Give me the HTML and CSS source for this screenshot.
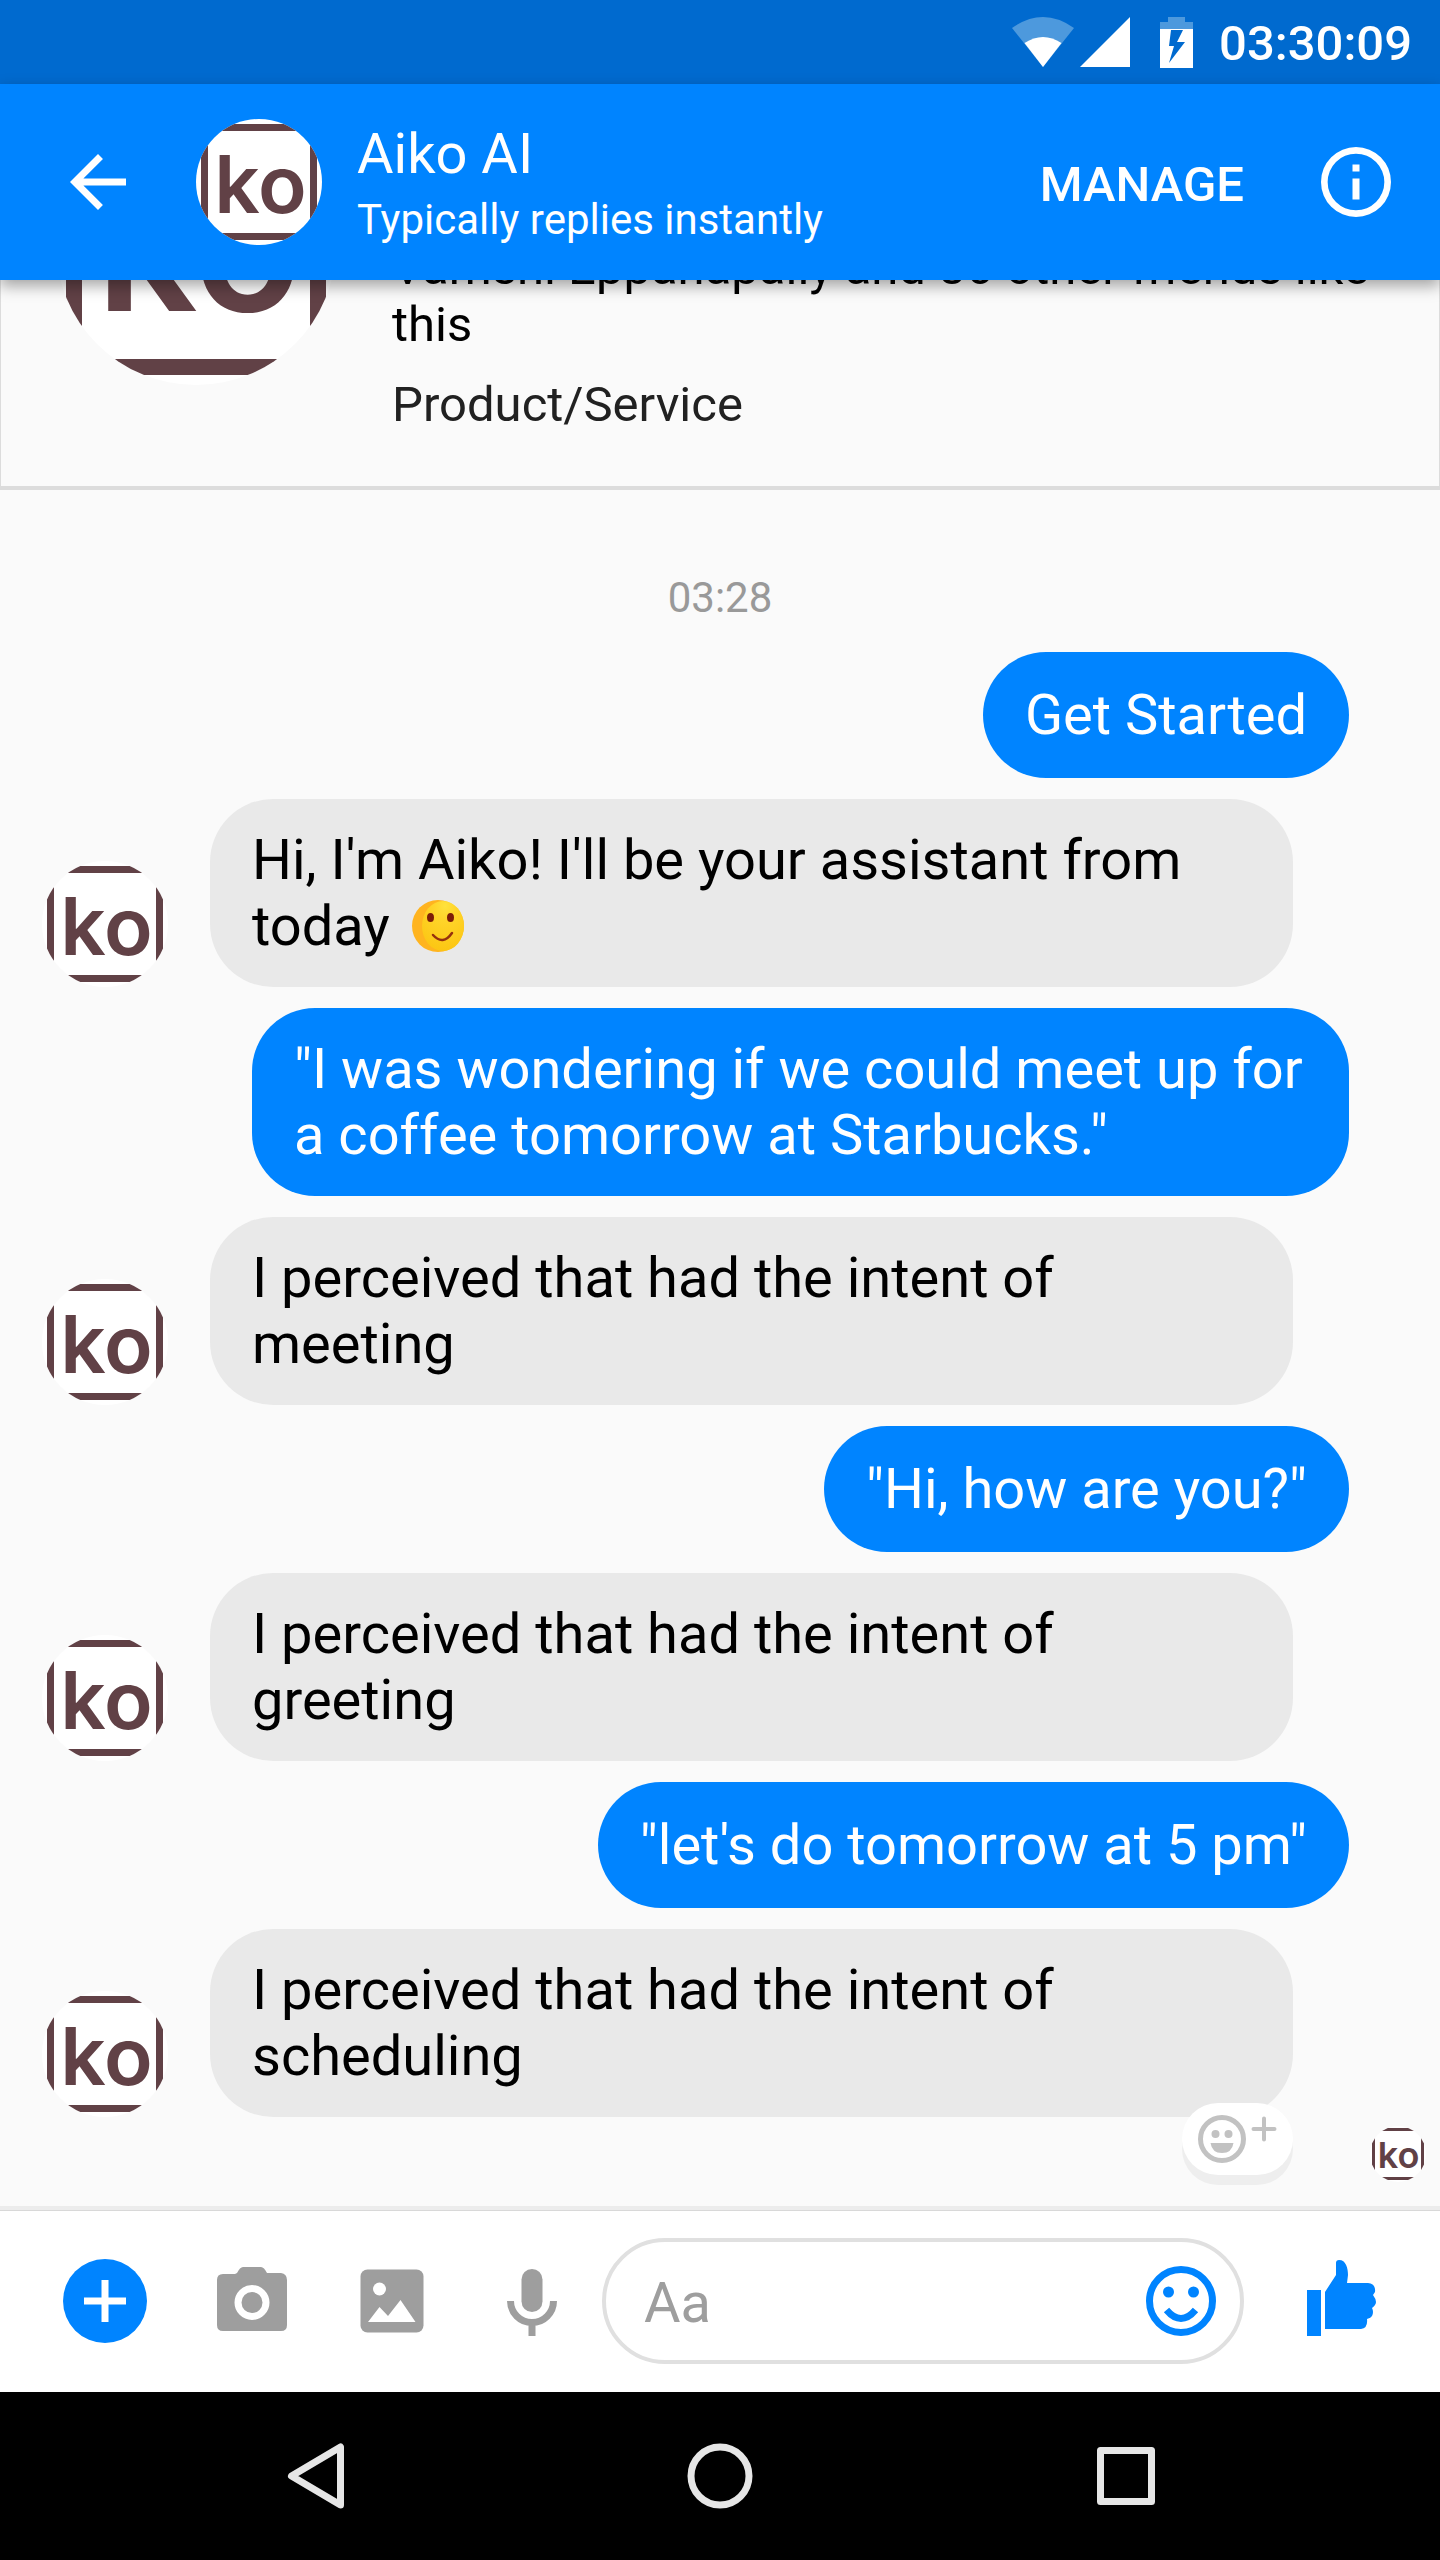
FILE: index.html
```html
<!DOCTYPE html>
<html lang="en">
<head>
<meta charset="utf-8">
<meta name="viewport" content="width=device-width, initial-scale=1">
<title>Aiko AI</title>
<link rel="stylesheet" href="styles.css">
</head>
<body>
<div class="phone">
  <div class="status">
    <svg class="wifi" viewBox="0 0 62 50"><path d="M0 11Q31-11 62 11L31 50Z" fill="#4d99dd"/><path d="M12.500 26Q31 14 49.500 26L31 50Z" fill="#fff"/></svg>
    <svg class="signal" viewBox="0 0 50 50"><path d="M50 0V50H0Z" fill="#fff"/></svg>
    <svg class="battery" viewBox="0 0 33 51"><path d="M0 12V5H8V0H25V5H33V12Z" fill="#4d99dd"/><path d="M0 12H33V51H0Z" fill="#fff"/><path d="M11 13H23L17 25H25L9 46L14 29H9Z" fill="#006acf"/></svg>
    <time class="clock">03:30:09</time>
  </div>
  <header class="toolbar">
    <button class="icon-btn" aria-label="Back"><svg viewBox="0 0 24 24"><path d="M20 11H7.830l5.590-5.590L12 4l-8 8 8 8 1.410-1.410L7.830 13H20z" fill="#fff"/></svg></button>
    <span class="logo">ko</span>
    <div class="who">
      <h1>Aiko AI</h1>
      <p>Typically replies instantly</p>
    </div>
    <button class="manage">MANAGE</button>
    <button class="icon-btn" aria-label="Info"><svg viewBox="0 0 24 24"><path d="M11 17h2v-6h-2zm1-15a10 10 0 1 0 0 20 10 10 0 0 0 0-20m0 18.100a8.100 8.100 0 1 1 0-16.200 8.100 8.100 0 0 1 0 16.200M11 9h2V7h-2z" fill="#fff"/></svg></button>
  </header>
  <main class="thread">
    <section class="card">
      <span class="logo logo-large">ko</span>
      <div class="card-text">
        <p class="likes">Vamshi Eppanapally and 86 other friends like this</p>
        <p class="kind">Product/Service</p>
      </div>
    </section>
    <time class="stamp">03:28</time>
    <div class="messages">
      <div class="row out"><p class="bubble">Get Started</p></div>
      <div class="row in"><span class="logo">ko</span><p class="bubble">Hi, I'm Aiko! I'll be your assistant from today <svg class="emoji" viewBox="0 0 52 52" role="img" aria-label="smile"><defs><radialGradient id="face" cx=".55" cy=".1" r=".9"><stop offset="0" stop-color="#ffe23c"/><stop offset=".3" stop-color="#ffd52a"/><stop offset="1" stop-color="#fcc613"/></radialGradient></defs><circle cx="26" cy="26" r="26" fill="#ffb41f"/><ellipse cx="31" cy="26" rx="21" ry="25" fill="url(#face)"/><ellipse cx="18.500" cy="17.500" rx="3.500" ry="4.500" fill="#7d1d08"/><ellipse cx="38.500" cy="17.500" rx="3.500" ry="4.500" fill="#7d1d08"/><path d="M21 35Q31 46 40 33" fill="none" stroke="#96300e" stroke-width="2.500" stroke-linecap="round"/></svg></p></div>
      <div class="row out"><p class="bubble">"I was wondering if we could meet up for a coffee tomorrow at Starbucks."</p></div>
      <div class="row in"><span class="logo">ko</span><p class="bubble">I perceived that had the intent of meeting</p></div>
      <div class="row out"><p class="bubble">"Hi, how are you?"</p></div>
      <div class="row in"><span class="logo">ko</span><p class="bubble">I perceived that had the intent of greeting</p></div>
      <div class="row out"><p class="bubble">"let's do tomorrow at 5 pm"</p></div>
      <div class="row in"><span class="logo">ko</span><p class="bubble">I perceived that had the intent of scheduling</p>
        <button class="react" aria-label="Add reaction"><svg viewBox="0 0 80 50"><circle cx="24" cy="25" r="21.500" fill="none" stroke="#c2c2c2" stroke-width="5"/><circle cx="17.500" cy="20" r="4" fill="#c2c2c2"/><circle cx="30.500" cy="20" r="4" fill="#c2c2c2"/><path d="M12.500 29H35.500Q34 39 24 39T12.500 29Z" fill="#c2c2c2"/><path d="M55.500 15H76.500M66 4.500V25.500" stroke="#c2c2c2" stroke-width="4" stroke-linecap="round"/></svg></button>
      </div>
    </div>
    <span class="logo logo-small">ko</span>
  </main>
  <form class="composer">
    <button type="button" class="icon-btn" aria-label="More"><svg viewBox="0 0 84 84"><circle cx="42" cy="42" r="42" fill="#0084ff"/><path d="M21 42H63M42 21V63" stroke="#fff" stroke-width="7"/></svg></button>
    <button type="button" class="icon-btn camera" aria-label="Camera"><svg viewBox="0 0 84 84"><path fill="#9e9e9e" d="M27 14Q30 8 33 8H51Q54 8 57 14H71Q77 15 77 21V66Q77 72 71 72H13Q7 72 7 66V21Q7 15 13 15H25Z"/><circle cx="42" cy="43.500" r="14" fill="#9e9e9e" stroke="#fff" stroke-width="7"/></svg></button>
    <button type="button" class="icon-btn" aria-label="Picture"><svg viewBox="0 0 84 84"><rect x="10.500" y="10.500" width="63" height="63" rx="7" fill="#9e9e9e"/><circle cx="29.500" cy="30" r="6.500" fill="#fff"/><path d="M18 63L29.500 48L38 57L50.500 41L65.500 63Z" fill="#fff"/></svg></button>
    <button type="button" class="icon-btn" aria-label="Voice"><svg viewBox="0 0 84 84"><rect x="31.500" y="10" width="21" height="43" rx="10.500" fill="#9e9e9e"/><path d="M20.500 42A21.500 21.500 0 0 0 63.500 42M42 63V77" fill="none" stroke="#9e9e9e" stroke-width="7"/></svg></button>
    <div class="field">
      <input type="text" placeholder="Aa" aria-label="Message">
      <button type="button" class="icon-btn" aria-label="Emoji"><svg viewBox="0 0 84 84"><circle cx="42" cy="42" r="31.500" fill="none" stroke="#0084ff" stroke-width="7"/><circle cx="29.500" cy="33" r="5.500" fill="#0084ff"/><circle cx="54.500" cy="33" r="5.500" fill="#0084ff"/><path d="M27.500 51Q42 68 56.500 51" fill="none" stroke="#0084ff" stroke-width="7"/></svg></button>
    </div>
    <button type="button" class="icon-btn" aria-label="Like"><svg viewBox="0 0 84 84"><path fill="#0084ff" d="M7 31H21V77H7ZM25 70V33L36 16V4Q36 1 39 1C46 1 48 9 48 16L47 24H68Q76 25 75 33L73 36Q76 40 76 43Q76 46 72 49Q74 53 72 57Q71 59 67 60Q68 69 61 70Z"/></svg></button>
  </form>
  <nav class="sysnav">
    <button class="icon-btn" aria-label="System back"><svg viewBox="0 0 84 84"><path d="M19.500 42L68.500 13V71Z" fill="none" stroke="#e6e6e6" stroke-width="7" stroke-linejoin="round"/></svg></button>
    <button class="icon-btn" aria-label="Home"><svg viewBox="0 0 84 84"><circle cx="42" cy="42" r="29" fill="none" stroke="#e6e6e6" stroke-width="7"/></svg></button>
    <button class="icon-btn" aria-label="Recent apps"><svg viewBox="0 0 84 84"><rect x="16.500" y="16.500" width="51" height="51" fill="none" stroke="#e6e6e6" stroke-width="7" stroke-linejoin="round"/></svg></button>
  </nav>
</div>
</body>
</html>
```
FILE: styles.css
```css
* {
  box-sizing: border-box;
}

body {
  margin: 0;
  font-family: Roboto, "Liberation Sans", sans-serif;
  background: #fafafa;
}

h1,
p {
  margin: 0;
  font-weight: 400;
}

button {
  padding: 0;
  border: 0;
  background: none;
  color: inherit;
  font: inherit;
  flex: none;
}

svg {
  display: block;
  flex: none;
}

.phone {
  display: flex;
  flex-direction: column;
  min-height: 100vh;
}

/* Round brand mark: lettering inside a square frame cropped by the circle */
.logo {
  position: relative;
  flex: none;
  width: 126px;
  height: 126px;
  padding-left: 3px;
  border-radius: 50%;
  overflow: hidden;
  background: #fff;
  color: #614146;
  font: 600 80px/130px Inter, sans-serif;
  text-align: center;
}

.logo::before {
  content: "";
  position: absolute;
  inset: 5px;
  border: 7px solid #614146;
}

.logo-large {
  width: 280px;
  height: 280px;
  padding-left: 6px;
  font-size: 178px;
  line-height: 284px;
}

.logo-large::before {
  inset: 10px;
  border-width: 16px;
}

.logo-small {
  width: 56px;
  height: 56px;
  padding-left: 1px;
  font-size: 36px;
  line-height: 58px;
}

.logo-small::before {
  inset: 2px;
  border-width: 3px;
}

/* System status bar */
.status {
  display: flex;
  align-items: center;
  justify-content: flex-end;
  height: 84px;
  padding-right: 28px;
  background: #006acf;
  color: #fff;
}

.wifi {
  width: 62px;
  height: 50px;
}

.signal {
  width: 50px;
  height: 50px;
  margin-left: 6px;
}

.battery {
  width: 33px;
  height: 51px;
  margin-left: 30px;
}

.clock {
  margin-left: 26px;
  padding-top: 4px;
  font-size: 49px;
  font-weight: 500;
  line-height: 56px;
}

/* Conversation header */
.toolbar {
  position: relative;
  z-index: 1;
  display: flex;
  align-items: center;
  height: 196px;
  padding: 0 42px 0 56px;
  background: #0084ff;
  color: #fff;
  box-shadow: 0 6px 14px rgba(0, 0, 0, .35);
}

.icon-btn {
  width: 84px;
  height: 84px;
}

.icon-btn svg {
  width: 84px;
  height: 84px;
}

.toolbar .logo {
  margin-left: 56px;
}

.who {
  flex: 1;
  margin-left: 35px;
  padding-top: 4px;
}

.who h1 {
  font-size: 56px;
  line-height: 66px;
}

.who p {
  font-size: 42px;
  line-height: 56px;
  padding-top: 5px;
}

.manage {
  margin-right: 70px;
  padding-top: 4px;
  font-size: 49px;
  font-weight: 500;
}

/* Thread */
.thread {
  flex: 1;
  display: flex;
  flex-direction: column;
}

.card {
  display: flex;
  align-items: flex-end;
  gap: 56px;
  height: 210px;
  padding: 0 56px 53px 55px;
  border: 1px solid #dcdcdc;
  border-width: 0 1px 4px;
  overflow: hidden;
}

.card .logo {
  margin-bottom: 48px;
}

.card-text {
  font-size: 49px;
  line-height: 57px;
}

.likes {
  color: #000;
}

.kind {
  padding-top: 23px;
  color: #212121;
}

.stamp {
  margin: 84px 0 30px;
  font-size: 42px;
  line-height: 48px;
  text-align: center;
  color: #999;
}

.messages {
  display: flex;
  flex-direction: column;
  gap: 21px;
}

.row {
  position: relative;
  display: flex;
  align-items: flex-end;
}

.in {
  gap: 42px;
  padding: 0 147px 0 42px;
}

.out {
  justify-content: flex-end;
  padding: 0 91px 0 252px;
}

.bubble {
  min-height: 126px;
  padding: 28px 42px;
  border-radius: 63px;
  font-size: 56px;
  line-height: 66px;
  background: #e9e9e9;
  color: #000;
}

.out .bubble {
  display: grid;
  align-content: center;
  background: #0084ff;
  color: #fff;
}

.emoji {
  display: inline-block;
  width: 52px;
  height: 52px;
  margin-left: 8px;
  vertical-align: -7px;
}

.react {
  position: absolute;
  right: 147px;
  bottom: -58px;
  display: flex;
  align-items: center;
  width: 111px;
  height: 72px;
  padding-left: 16px;
  border-radius: 36px;
  background: #fff;
  box-shadow: 0 10px 0 #eee;
}

.react svg {
  width: 80px;
  height: 50px;
}

.thread > .logo {
  align-self: flex-end;
  margin: 9px 14px 24px 0;
}

/* Composer */
.composer {
  display: flex;
  align-items: center;
  gap: 56px;
  height: 186px;
  padding: 0 56px 0 63px;
  border-top: 4px solid #ececec;
  background: #fff;
  box-shadow: inset 0 1px 0 #d8d8d8;
}

.composer .camera {
  margin-left: 7px;
}

.field {
  flex: 1;
  display: flex;
  align-items: center;
  min-width: 0;
  height: 126px;
  margin-left: -28px;
  padding: 0 17px 0 38px;
  border: 4px solid #e0e0e0;
  border-radius: 63px;
}

.field input {
  flex: 1;
  min-width: 0;
  padding: 4px 0 0;
  border: 0;
  outline: 0;
  background: none;
  color: #000;
  font: 400 56px/66px Roboto, "Liberation Sans", sans-serif;
}

.field input::placeholder {
  color: #9e9e9e;
  opacity: 1;
}

/* System navigation */
.sysnav {
  display: grid;
  grid-template-columns: repeat(3, 1fr);
  align-items: center;
  justify-items: center;
  height: 168px;
  padding: 0 111px;
  background: #000;
}
```
